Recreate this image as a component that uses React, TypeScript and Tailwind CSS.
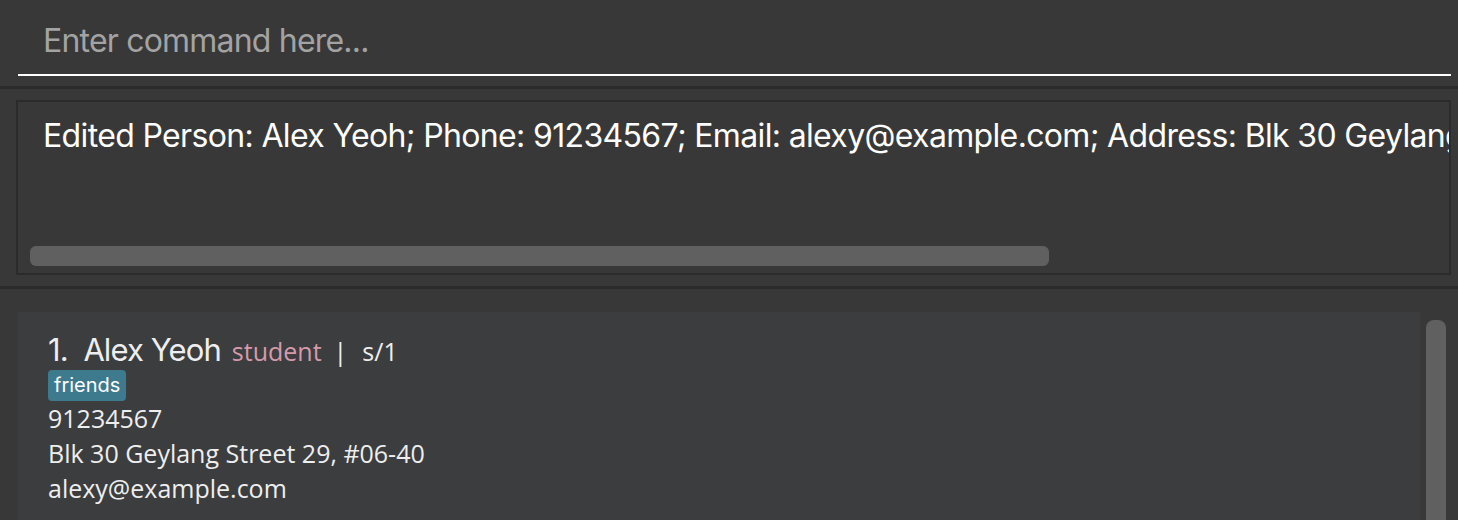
import { useState } from 'react';

const resultText =
  'Edited Person: Alex Yeoh; Phone: 91234567; Email: alexy@example.com; Address: Blk 30 Geylang Street 29, #06-40; Tags: [friends]';

function CommandBox() {
  const [command, setCommand] = useState('');
  return (
    <div className="h-[86px] pl-[18px] pr-[7px] pt-[14px]">
      <input
        value={command}
        onChange={(e) => setCommand(e.target.value)}
        placeholder="Enter command here..."
        className="w-full h-[62px] bg-transparent border-b-2 border-white pl-[25px] pb-[8px] text-[32px] tracking-[-0.8px] text-white placeholder:text-[#a3a3a3] outline-none font-['Inter',sans-serif]"
      />
    </div>
  );
}

function ResultDisplay() {
  return (
    <div className="h-[197px] pl-[16px] pr-[7px] pt-[11px]">
      <div className="h-[175px] border-2 border-[#2b2b2b] flex flex-col overflow-hidden">
        <div className="pl-[25px] pt-[14px] whitespace-nowrap overflow-hidden text-[32px] leading-[40px] tracking-[-0.65px] text-white font-['Inter',sans-serif]">
          {resultText}
        </div>
        <div className="flex-1" />
        <div className="pl-[12px] pb-[7px]">
          <div className="w-[1019px] h-[20px] rounded-[6px] bg-[#606060]" />
        </div>
      </div>
    </div>
  );
}

function PersonCard() {
  return (
    <div className="flex-1 bg-[#3c3d3f] pl-[30px] pt-[18px] pb-[20px] text-[#eeeeee] font-['Open_Sans',sans-serif]">
      <div className="flex items-baseline whitespace-nowrap h-[40px] leading-[40px]">
        <span className="text-[31px] tracking-[-0.9px] font-['Inter',sans-serif]">1.&nbsp;&nbsp;Alex Yeoh</span>
        <span className="ml-[11px] text-[25px] text-[#d69aaa]">student</span>
        <span className="ml-[12px] text-[25px]">|</span>
        <span className="ml-[15px] text-[25px]">s/1</span>
      </div>
      <div className="flex">
        <span className="rounded-[4px] bg-[#3d7a8e] px-[6px] h-[31px] leading-[31px] text-[20px] text-white font-['Inter',sans-serif]">
          friends
        </span>
      </div>
      <div className="text-[25px] leading-[35px]">91234567</div>
      <div className="text-[25px] leading-[35px]">Blk 30 Geylang Street 29, #06-40</div>
      <div className="text-[25px] leading-[35px]">alexy@example.com</div>
    </div>
  );
}

export default function App() {
  return (
    <div className="w-[1458px] h-[520px] overflow-hidden bg-[#383838] flex flex-col">
      <CommandBox />
      <div className="h-[3px] bg-[#2b2b2b]" />
      <ResultDisplay />
      <div className="h-[3px] bg-[#2b2b2b]" />
      <div className="flex-1 flex pl-[18px] pt-[23px] overflow-hidden">
        <PersonCard />
        <div className="w-[38px] pl-[6px] pt-[8px]">
          <div className="w-[20px] h-[300px] rounded-[8px] bg-[#606060]" />
        </div>
      </div>
    </div>
  );
}
